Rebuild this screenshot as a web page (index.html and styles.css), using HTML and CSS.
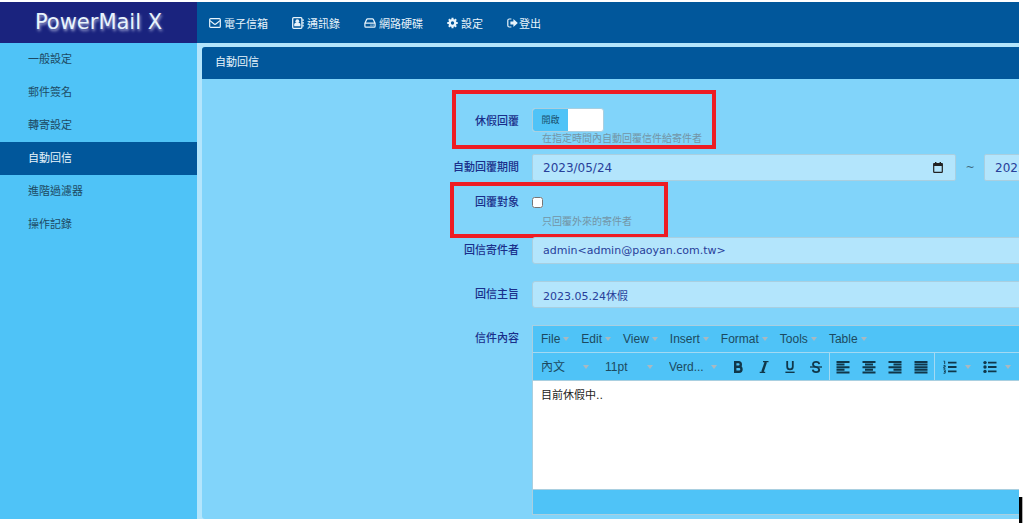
FILE: index.html
```html
<!DOCTYPE html>
<html lang="zh-Hant">
<head>
    <meta charset="UTF-8">
    <meta name="viewport" content="width=device-width, initial-scale=1.0">
    <title>PowerMail X</title>
    <link rel="stylesheet" href="styles.css">
</head>
<body>
    <div class="app">
        <header class="topbar">
            <h1 class="brand">PowerMail X</h1>
            <nav class="topnav">
                <a href="#">
                    <svg width="12" height="12" viewBox="0 0 12 12" fill="none" stroke="currentColor" stroke-width="1.2"><rect x="0.7" y="1.6" width="10.6" height="8.8" rx="1"/><path d="M1 3.6l3.8 3.2q1.2 1 2.4 0L11 3.6"/></svg>
                    電子信箱
                </a>
                <a href="#">
                    <svg width="12" height="12" viewBox="0 0 12 12"><rect x="0.7" y="0.7" width="9.2" height="10.6" rx="1" fill="none" stroke="currentColor" stroke-width="1.3"/><circle cx="5.3" cy="4.2" r="1.9" fill="currentColor"/><path d="M2.2 9.2V7.4q0-1.6 1.6-1.6h3q1.6 0 1.6 1.6v1.8z" fill="currentColor"/><path d="M10.4 2.2h1.3v1.8h-1.3zM10.4 5h1.3v1.8h-1.3zM10.4 7.8h1.3v1.8h-1.3z" fill="currentColor"/></svg>
                    通訊錄
                </a>
                <a href="#">
                    <svg width="12" height="12" viewBox="0 0 12 12" fill="none" stroke="currentColor" stroke-width="1.2"><path d="M0.9 6.2L2.7 2.4q.3-.5.9-.5h4.8q.6 0 .9.5l1.8 3.8v3q0 .9-.9.9H1.8q-.9 0-.9-.9zM1 6.2h10"/><path d="M6.5 8.2h1M8.6 8.2h1"/></svg>
                    網路硬碟
                </a>
                <a href="#">
                    <svg width="11" height="12" viewBox="0 0 12 12"><circle cx="6" cy="6" r="3.1" fill="none" stroke="currentColor" stroke-width="2.6"/><path d="M6 .3v2M6 9.7v2M.3 6h2M9.7 6h2M2 2l1.4 1.4M8.6 8.6L10 10M10 2L8.6 3.4M3.4 8.6L2 10" stroke="currentColor" stroke-width="2.2"/></svg>
                    設定
                </a>
                <a href="#" class="logout">
                    <svg width="11" height="12" viewBox="0 0 11 12"><path d="M4.4 2H2.3Q.8 2 .8 3.5v5Q.8 10 2.3 10h2.1" fill="none" stroke="currentColor" stroke-width="1.2"/><path d="M3.4 4.5h3V2L10.8 6 6.4 10V7.5h-3z" fill="currentColor"/></svg>
                    登出
                </a>
            </nav>
        </header>

        <div class="body">
            <ul class="sidebar">
                <li><a href="#">一般設定</a></li>
                <li><a href="#">郵件簽名</a></li>
                <li><a href="#">轉寄設定</a></li>
                <li class="active"><a href="#">自動回信</a></li>
                <li><a href="#">進階過濾器</a></li>
                <li><a href="#">操作記錄</a></li>
            </ul>

            <main class="panel">
                <h2 class="panel-title">自動回信</h2>
                <form class="reply-form">
                    <div class="form-row">
                        <label class="form-label" for="vacation">休假回覆</label>
                        <div class="field">
                            <button type="button" id="vacation" class="switch"><span>開啟</span></button>
                            <p class="help">在指定時間內自動回覆信件給寄件者</p>
                        </div>
                        <div class="mark mark-vacation"></div>
                    </div>

                    <div class="form-row">
                        <label class="form-label" for="date-from">自動回覆期間</label>
                        <div class="field dates">
                            <div class="date-box">
                                <input type="text" id="date-from" value="2023/05/24">
                                <svg width="10" height="11" viewBox="0 0 10 11"><rect x="0.7" y="1.7" width="8.6" height="8.6" rx="0.6" fill="none" stroke="#222" stroke-width="1.2"/><path d="M.5 1.2h9V4h-9zM2 0h1.4v2H2zM6.6 0H8v2H6.6z" fill="#222"/></svg>
                            </div>
                            <span class="tilde">~</span>
                            <div class="date-box">
                                <input type="text" id="date-to" aria-label="結束日期" value="2023/05/24">
                            </div>
                        </div>
                    </div>

                    <div class="form-row">
                        <label class="form-label" for="target">回覆對象</label>
                        <div class="field">
                            <div class="check"><input type="checkbox" id="target"></div>
                            <p class="help">只回覆外來的寄件者</p>
                        </div>
                        <div class="mark mark-target"></div>
                    </div>

                    <div class="form-row form-row-text">
                        <label class="form-label" for="sender">回信寄件者</label>
                        <div class="field"><input type="text" id="sender" class="text-input" value="admin&lt;admin@paoyan.com.tw&gt;"></div>
                    </div>

                    <div class="form-row form-row-text">
                        <label class="form-label" for="subject">回信主旨</label>
                        <div class="field"><input type="text" id="subject" class="text-input" value="2023.05.24休假"></div>
                    </div>

                    <div class="form-row">
                        <label class="form-label" for="content">信件內容</label>
                        <div class="field editor">
                            <div class="menubar">
                                <button type="button">File</button>
                                <button type="button">Edit</button>
                                <button type="button">View</button>
                                <button type="button">Insert</button>
                                <button type="button">Format</button>
                                <button type="button">Tools</button>
                                <button type="button">Table</button>
                            </div>
                            <div class="toolbar">
                                <div class="group">
                                    <div class="pick"><select aria-label="段落"><option>內文</option></select></div>
                                    <div class="pick"><select aria-label="字級"><option>11pt</option></select></div>
                                    <div class="pick"><select aria-label="字型"><option>Verd...</option></select></div>
                                    <button type="button" aria-label="粗體"><svg width="14" height="14" viewBox="0 0 14 14" fill="none" stroke="currentColor" stroke-width="2.4"><path d="M4.2 2.1h3.3q2.3 0 2.3 2.3t-2.3 2.3H4.2zM4.2 6.8h3.9q2.4 0 2.4 2.5t-2.4 2.5H4.2z"/></svg></button>
                                    <button type="button" aria-label="斜體"><svg width="14" height="14" viewBox="0 0 14 14" fill="none" stroke="currentColor"><path d="M8.8 2L5.4 12" stroke-width="2.4"/><path d="M6 1.7h5.5M2.7 12.3h5.5" stroke-width="1.2"/></svg></button>
                                    <button type="button" aria-label="底線"><svg width="14" height="14" viewBox="0 0 14 14" fill="none" stroke="currentColor"><path d="M4.2 1v5.8q0 2.6 2.8 2.6t2.8-2.6V1" stroke-width="1.8"/><path d="M2.4 12.3h9.2" stroke-width="1.4"/></svg></button>
                                    <button type="button" aria-label="刪除線"><svg width="14" height="14" viewBox="0 0 14 14" fill="none" stroke="currentColor"><path d="M10.2 4.2Q10 1.9 7.1 1.9T4 4.2q0 2 3 2.8t3.2 2.8q0 2.3-3.1 2.3T3.8 9.6" stroke-width="1.8"/><path d="M1 7h12" stroke-width="1.3"/></svg></button>
                                </div>
                                <div class="group">
                                    <button type="button" aria-label="靠左"><svg width="14" height="14" viewBox="0 0 14 14" stroke="currentColor" stroke-width="2"><path d="M.5 2h13M.5 4.6h8M.5 7.2h13M.5 9.8h8M.5 12.4h13"/></svg></button>
                                    <button type="button" aria-label="置中"><svg width="14" height="14" viewBox="0 0 14 14" stroke="currentColor" stroke-width="2"><path d="M.5 2h13M3 4.6h8M.5 7.2h13M3 9.8h8M.5 12.4h13"/></svg></button>
                                    <button type="button" aria-label="靠右"><svg width="14" height="14" viewBox="0 0 14 14" stroke="currentColor" stroke-width="2"><path d="M.5 2h13M5.5 4.6h8M.5 7.2h13M5.5 9.8h8M.5 12.4h13"/></svg></button>
                                    <button type="button" aria-label="左右對齊"><svg width="14" height="14" viewBox="0 0 14 14" stroke="currentColor" stroke-width="2"><path d="M.5 2h13M.5 4.6h13M.5 7.2h13M.5 9.8h13M.5 12.4h13"/></svg></button>
                                </div>
                                <div class="group">
                                    <button type="button" class="split" aria-label="編號清單"><svg width="14" height="14" viewBox="0 0 14 14" fill="none" stroke="currentColor"><path d="M5 2.6h8.5M5 7h8.5M5 11.4h8.5" stroke-width="1.8"/><path d="M.6 1.2h1.1v3M.5 5.6h1.7v1.3H.8v1.4h1.6M.5 9.8h1.7v3.4H.5M1 11.5h1.2" stroke-width=".9"/></svg></button>
                                    <button type="button" class="split" aria-label="項目清單"><svg width="14" height="14" viewBox="0 0 14 14" fill="currentColor" stroke="currentColor"><path d="M5 2.6h8.5M5 7h8.5M5 11.4h8.5" stroke-width="1.8"/><g stroke="none"><circle cx="2" cy="2.6" r="1.7"/><circle cx="2" cy="7" r="1.7"/><circle cx="2" cy="11.4" r="1.7"/></g></svg></button>
                                </div>
                            </div>
                            <textarea id="content">目前休假中..</textarea>
                            <div class="statusbar"></div>
                        </div>
                    </div>
                </form>
            </main>
        </div>
    </div>
    <div class="caret-bar"></div>
</body>
</html>
```
FILE: styles.css
```css
/* General */
* {
    box-sizing: border-box;
}

body {
    margin: 0;
    background-color: #ffffff;
    font-family: "DejaVu Sans", "Noto Sans CJK TC", sans-serif;
    font-size: 11px;
    overflow: hidden;
}

a {
    color: inherit;
    text-decoration: none;
}

button, input, select, textarea {
    font-family: inherit;
    margin: 0;
}

.app {
    display: flex;
    flex-direction: column;
    height: calc(100vh - 6px);
    margin: 2px 5px 4px 0;
    background-color: #b3e5fc;
    overflow: hidden;
}

/* Top bar */
.topbar {
    display: flex;
    flex: none;
    height: 41px;
    background-color: #01579b;
    color: #e8f4fc;
}

.brand {
    width: 197px;
    margin: 0;
    background-color: #1a237e;
    font-size: 21px;
    font-weight: normal;
    line-height: 41px;
    text-align: center;
    text-shadow: 1px 2px 3px #a5acd8;
}

.topnav {
    display: flex;
    align-items: center;
    gap: 24px;
    padding-left: 12px;
}

.topnav a {
    display: flex;
    align-items: center;
    gap: 3px;
    white-space: nowrap;
}

.topnav .logout {
    gap: 1px;
}

.body {
    display: flex;
    flex: 1;
    min-height: 0;
}

/* Sidebar */
.sidebar {
    flex: none;
    width: 197px;
    margin: 0;
    padding: 0;
    list-style: none;
    background-color: #4fc3f7;
    color: #1d4a63;
}

.sidebar a {
    display: block;
    height: 33px;
    padding-left: 28px;
    line-height: 33px;
}

.sidebar .active {
    background-color: #01579b;
    color: #e8f4fc;
}

/* Panel */
.panel {
    flex: 1;
    min-width: 0;
    margin: 4px -12px 0 5px;
    border-radius: 3px;
    background-color: #81d4fa;
}

.panel-title {
    height: 32px;
    margin: 0;
    padding-left: 13px;
    border-radius: 3px 3px 0 0;
    background-color: #01579b;
    color: #e8f4fc;
    font-size: 11px;
    font-weight: normal;
    line-height: 32px;
}

/* Form */
.reply-form {
    display: flex;
    flex-direction: column;
    gap: 8px;
    padding-top: 29px;
}

.form-row {
    display: flex;
    position: relative;
}

.form-row-text {
    padding-bottom: 9px;
}

.form-label {
    flex: none;
    width: 330px;
    padding-right: 13px;
    color: #1a2f8a;
    font-weight: 500;
    line-height: 27px;
    text-align: right;
}

.field {
    flex: 1;
    min-width: 0;
}

.help {
    margin: 0;
    padding-left: 10px;
    color: #7394a6;
    font-size: 10px;
    line-height: 14px;
}

.switch {
    display: flex;
    width: 72px;
    height: 24px;
    padding: 0;
    border: 1px solid #a9cfe0;
    border-radius: 3px;
    background-color: #ffffff;
    color: #17506e;
    font-size: 9px;
    line-height: 22px;
    overflow: hidden;
}

.switch span {
    width: 35px;
    background-color: #4fc3f7;
}

.dates {
    display: flex;
    overflow: hidden;
}

.date-box {
    display: flex;
    flex: none;
    align-items: center;
    width: 424px;
    height: 27px;
    padding: 0 12px 0 10px;
    border: 1px solid #a9cfe0;
    border-radius: 2px;
    background-color: #b3e5fc;
}

.date-box input {
    flex: 1;
    min-width: 0;
    padding: 0;
    border: none;
    background: none;
    color: #28409a;
    font-size: 12px;
}

.tilde {
    flex: none;
    width: 28px;
    color: #3f6a80;
    line-height: 27px;
    text-align: center;
}

.check {
    display: flex;
    align-items: center;
    height: 26px;
}

.check input {
    width: 11px;
    height: 11px;
}

.text-input {
    display: block;
    width: 100%;
    height: 27px;
    padding: 0 10px;
    border: 1px solid #a9cfe0;
    border-radius: 3px;
    background-color: #b3e5fc;
    color: #28409a;
    font-size: 11px;
}

/* Red frames around the options */
.mark {
    position: absolute;
    border: 4px solid #ed1c24;
    pointer-events: none;
}

.mark-vacation {
    top: -18px;
    left: 250px;
    width: 264px;
    height: 59px;
}

.mark-target {
    top: -7px;
    left: 248px;
    width: 218px;
    height: 56px;
}

/* Editor */
.editor {
    border: 1px solid #a9cfe0;
    color: #1c4a60;
    font-family: "Liberation Sans", "Noto Sans CJK TC", sans-serif;
    font-size: 12px;
}

.editor button, .editor select {
    padding: 0;
    border: none;
    background: none;
    color: inherit;
    font-size: 12px;
}

.menubar {
    display: flex;
    height: 26px;
    padding-left: 2px;
    background-color: #4fc3f7;
}

.menubar button {
    display: flex;
    align-items: center;
    gap: 3px;
    padding: 0 6px;
}

/* Small drop-down arrows */
.menubar button::after, .pick::after, .split::after {
    content: "";
    border-top: 4px solid #a9b9c1;
    border-left: 3px solid transparent;
    border-right: 3px solid transparent;
}

.toolbar {
    display: flex;
    height: 29px;
    border-top: 1px solid #a3d9f2;
    border-bottom: 1px solid #a9cfe0;
    background-color: #4fc3f7;
}

.group {
    display: flex;
    flex: none;
}

.group + .group {
    border-left: 1px solid #a3d9f2;
}

.pick {
    display: flex;
    align-items: center;
    width: 64px;
    padding: 0 8px;
}

.pick select {
    flex: 1;
    min-width: 0;
    appearance: none;
}

.group button {
    display: flex;
    align-items: center;
    justify-content: center;
    width: 26px;
    color: #10374a;
}

.group .split {
    justify-content: flex-start;
    gap: 8px;
    width: 40px;
    padding-left: 8px;
}

.editor textarea {
    display: block;
    width: 100%;
    height: 108px;
    padding: 5px 8px;
    border: none;
    background-color: #ffffff;
    color: #222222;
    font-family: "DejaVu Sans", "Noto Sans CJK TC", sans-serif;
    font-size: 11px;
    resize: none;
}

.statusbar {
    height: 25px;
    border-top: 1px solid #a9cfe0;
    background-color: #4fc3f7;
}

/* Bar in the bottom corner */
.caret-bar {
    position: absolute;
    right: 2px;
    bottom: 0;
    width: 3px;
    height: 26px;
    background-color: #000000;
    box-shadow: 1px 0 0 #b0b0b0;
}
```
